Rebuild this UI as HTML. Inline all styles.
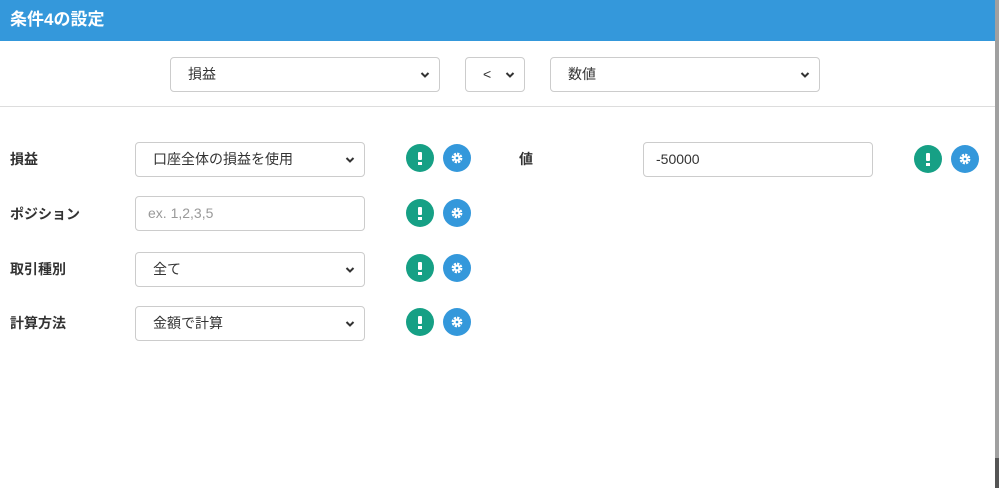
<!DOCTYPE html>
<html><head><meta charset="utf-8"><style>
*{box-sizing:border-box;margin:0;padding:0}
body{width:999px;height:488px;background:#fff;position:relative;overflow:hidden;font-family:"Liberation Sans","Noto Sans CJK JP",sans-serif;color:#333}
.hdr{position:absolute;left:0;top:0;width:995px;height:41px;background:#3498db}
.hdr span{position:absolute;left:10px;top:5px;color:#fff;font-weight:bold;font-size:17px}
.line{position:absolute;left:0;top:106px;width:995px;height:1px;background:#ddd}
.f{position:absolute;height:35px;border:1px solid #ccc;border-radius:4px;background:#fff;font-size:14px;padding:0 0 0 17px;line-height:33px;color:#333}
.f svg{position:absolute;right:8px;top:13px}
.ph{color:#999;padding-left:12px}
.lb{position:absolute;font-size:14px;font-weight:bold;color:#333}
.c{position:absolute;width:28px;height:28px;border-radius:50%}
.g{background:#16a085}
.b{background:#3498db}
.g:before{content:"";position:absolute;left:12px;top:8px;width:4px;height:8px;background:#fff;border-radius:1px}
.g:after{content:"";position:absolute;left:12px;top:18px;width:4px;height:3px;background:#fff}
.b svg{position:absolute;left:8px;top:8px}
.sb{position:absolute;right:0;top:0;width:4px;height:488px;background:#a0a0a0}
.sb2{position:absolute;right:0;top:458px;width:4px;height:30px;background:#555}
</style></head><body>
<div class="hdr"><span>条件4の設定</span></div>
<div class="line"></div>
<div class="sb"></div><div class="sb2"></div>

<div class="f" style="left:170px;top:57px;width:270px">損益<svg width="12" height="8" viewBox="0 0 12 8"><path d="M2.5 2l3.5 3.5 3.5-3.5" stroke="#333" stroke-width="2" fill="none"/></svg></div>
<div class="f" style="left:465px;top:57px;width:60px">&lt;<svg width="12" height="8" viewBox="0 0 12 8"><path d="M2.5 2l3.5 3.5 3.5-3.5" stroke="#333" stroke-width="2" fill="none"/></svg></div>
<div class="f" style="left:550px;top:57px;width:270px">数値<svg width="12" height="8" viewBox="0 0 12 8"><path d="M2.5 2l3.5 3.5 3.5-3.5" stroke="#333" stroke-width="2" fill="none"/></svg></div>

<div class="lb" style="left:10px;top:149px">損益</div>
<div class="f" style="left:135px;top:142px;width:230px">口座全体の損益を使用<svg width="12" height="8" viewBox="0 0 12 8"><path d="M2.5 2l3.5 3.5 3.5-3.5" stroke="#333" stroke-width="2" fill="none"/></svg></div>
<div class="c g" style="left:406px;top:144px"></div><div class="c b" style="left:443px;top:144px"><svg width="12" height="12" viewBox="0 0 12 12"><circle cx="6" cy="6" r="4.2" fill="none" stroke="#fff" stroke-width="2.4" stroke-dasharray="2.2 1.1"/><circle cx="6" cy="6" r="3.4" fill="#fff"/><circle cx="6" cy="6" r="1.3" fill="#3498db"/></svg></div>

<div class="lb" style="left:519px;top:149px">値</div>
<div class="f ph" style="left:643px;top:142px;width:230px;color:#333;padding-left:12px">-50000</div>
<div class="c g" style="left:914px;top:145px"></div><div class="c b" style="left:951px;top:145px"><svg width="12" height="12" viewBox="0 0 12 12"><circle cx="6" cy="6" r="4.2" fill="none" stroke="#fff" stroke-width="2.4" stroke-dasharray="2.2 1.1"/><circle cx="6" cy="6" r="3.4" fill="#fff"/><circle cx="6" cy="6" r="1.3" fill="#3498db"/></svg></div>

<div class="lb" style="left:10px;top:204px">ポジション</div>
<div class="f ph" style="left:135px;top:196px;width:230px">ex. 1,2,3,5</div>
<div class="c g" style="left:406px;top:199px"></div><div class="c b" style="left:443px;top:199px"><svg width="12" height="12" viewBox="0 0 12 12"><circle cx="6" cy="6" r="4.2" fill="none" stroke="#fff" stroke-width="2.4" stroke-dasharray="2.2 1.1"/><circle cx="6" cy="6" r="3.4" fill="#fff"/><circle cx="6" cy="6" r="1.3" fill="#3498db"/></svg></div>

<div class="lb" style="left:10px;top:259px">取引種別</div>
<div class="f" style="left:135px;top:252px;width:230px">全て<svg width="12" height="8" viewBox="0 0 12 8"><path d="M2.5 2l3.5 3.5 3.5-3.5" stroke="#333" stroke-width="2" fill="none"/></svg></div>
<div class="c g" style="left:406px;top:254px"></div><div class="c b" style="left:443px;top:254px"><svg width="12" height="12" viewBox="0 0 12 12"><circle cx="6" cy="6" r="4.2" fill="none" stroke="#fff" stroke-width="2.4" stroke-dasharray="2.2 1.1"/><circle cx="6" cy="6" r="3.4" fill="#fff"/><circle cx="6" cy="6" r="1.3" fill="#3498db"/></svg></div>

<div class="lb" style="left:10px;top:313px">計算方法</div>
<div class="f" style="left:135px;top:306px;width:230px">金額で計算<svg width="12" height="8" viewBox="0 0 12 8"><path d="M2.5 2l3.5 3.5 3.5-3.5" stroke="#333" stroke-width="2" fill="none"/></svg></div>
<div class="c g" style="left:406px;top:308px"></div><div class="c b" style="left:443px;top:308px"><svg width="12" height="12" viewBox="0 0 12 12"><circle cx="6" cy="6" r="4.2" fill="none" stroke="#fff" stroke-width="2.4" stroke-dasharray="2.2 1.1"/><circle cx="6" cy="6" r="3.4" fill="#fff"/><circle cx="6" cy="6" r="1.3" fill="#3498db"/></svg></div>
</body></html>
